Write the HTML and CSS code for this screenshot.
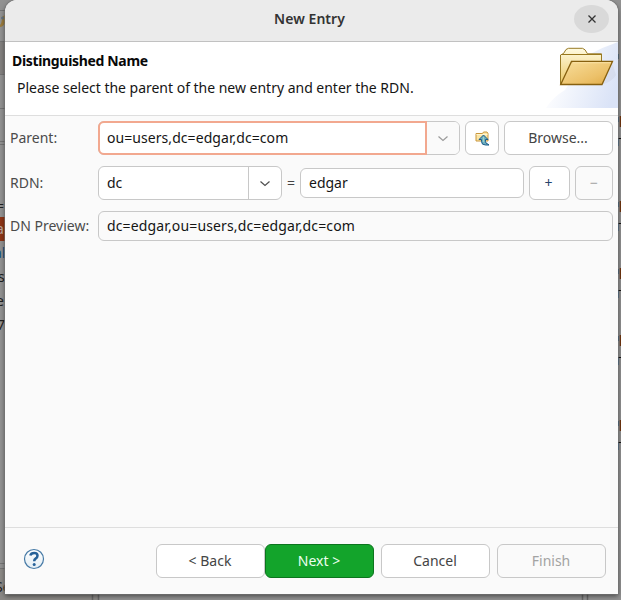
FILE: index.html
```html
<!DOCTYPE html>
<html lang="en">
<head>
<meta charset="utf-8">
<title>New Entry</title>
<link rel="stylesheet" href="styles.css">
</head>
<body>
<svg class="backdrop" width="621" height="600" viewBox="0 0 621 600" aria-hidden="true">
  <rect width="621" height="600" fill="#929292"/>
  <path d="M0 42h5v33H0z" fill="#83817f"/>
  <path d="M0 10.500h5M0 41.500h5M0 74.500h5M0 108.500h5M0 141.500h5M0 144.500h5M0 563.500h5M0 568.500h5" stroke="#747474"/>
  <path d="M-1 26Q2 24 2 17L5 15V23Q3 27 0 27z" fill="#9b7c3e"/><circle cx="2.500" cy="18" r="1.500" fill="#667582"/>
  <path d="M0 569h98v31H0z" fill="#8b8986"/>
  <path d="M92.500 594v6M98.500 594v6M582.500 594v6M587.500 594v6" stroke="#686868" stroke-width="1.500"/>
  <path d="M0 217h5v24H0z" fill="#8e3516"/>
  <g class="backdrop-text">
    <text x="-4" y="211">=</text><text x="-4" y="234" fill="#b9a69e">a</text>
    <text x="-6" y="258" fill="#164f7c">al</text><text x="-2" y="282">s</text>
    <text x="-4" y="306">e</text><text x="-3" y="330">7</text><text x="-5" y="592">Se</text>
  </g>
  <g>
    <path d="M618 138.500h3M618 223.500h3M618 290.500h3M618 357.500h3M618 442.500h3" stroke="#151515"/>
    <path d="M618.500 139v7M618.500 224v7M618.500 291v7M618.500 358v7M618.500 443v7" stroke="#315f88"/>
    <path d="M620.500 116v11M620.500 201v11M620.500 268v11M620.500 335v11M620.500 420v11" stroke="#6f3510" stroke-width="1.500"/>
    <path d="M618.500 117v5M618.500 202v5M618.500 269v5M618.500 336v5M618.500 421v5M618.500 54v5" stroke="#234e73"/>
  </g>
</svg>

<main class="dialog">
  <header class="titlebar">
    <h1><span class="t">New Entry</span></h1>
    <button class="close" aria-label="Close"><svg width="10" height="10" viewBox="0 0 10 10"><path d="M1.500 1.500l7 7M8.500 1.500l-7 7" stroke="#333" stroke-width="1.300"/></svg></button>
  </header>

  <section class="banner">
    <div class="banner-copy">
      <h2><span class="t">Distinguished Name</span></h2>
      <p><span class="t">Please select the parent of the new entry and enter the RDN.</span></p>
    </div>
    <svg class="folder" width="75" height="66" viewBox="0 0 75 66">
      <defs>
        <linearGradient id="glow" x1="0" y1=".3" x2="1" y2=".6"><stop offset=".1" stop-color="#fff"/><stop offset="1" stop-color="#dae3f7"/></linearGradient>
        <linearGradient id="back" x2="0" y2="1"><stop stop-color="#fffbe1"/><stop offset="1" stop-color="#ecc865"/></linearGradient>
        <linearGradient id="front" x2="1" y2="1"><stop stop-color="#f8df9d"/><stop offset=".65" stop-color="#ecc16a"/><stop offset="1" stop-color="#dfaa45"/></linearGradient>
      </defs>
      <path d="M75 0V66H3Q10 55 22 48L45 13Q60 5 75 0z" fill="url(#glow)"/>
      <path d="M58 43L69 20l4 13q-4 7-15 10z" fill="#cbcfdf" opacity=".4"/>
      <path d="M17.500 42.500V13l3-1.500 2.500-4 2.500-1.200h14l2.500 1.500 2.500 4H58.500v28L17.500 42.500z" fill="url(#back)" stroke="#987a25"/>
      <path d="M19 12.500h39" stroke="#98771c"/>
      <path d="M17.700 42.500L28.500 19.500H69.500L59 42.500z" fill="url(#front)" stroke="#87600f" stroke-width="1.300"/>
      <path d="M29.500 20.700H68" stroke="#ffe7ac"/>
    </svg>
  </section>

  <section class="form">
    <div class="row">
      <label><span class="t">Parent:</span></label>
      <div class="combo parent-combo">
        <div class="entry focused"><span class="t w-dn">ou=users,dc=edgar,dc=com</span></div>
        <div class="arrow muted"><svg width="12" height="8" viewBox="0 0 12 8"><path d="M1.500 1.500L6 5.500l4.500-4"/></svg></div>
      </div>
      <button class="btn up" aria-label="Parent">
        <svg width="16" height="16" viewBox="0 0 16 16"><path d="M1 11V3.500h6.500l1-1.500h3.500l1 1.500V11z" fill="#fbe5a5" stroke="#c9963c"/><path d="M1.500 4.500h11" stroke="#fff5cf"/><path d="M8.500 5L4 9.500h2.500v2q0 3.500 4 3.500h3.500l-1.500-1.200q-2-.3-2-2.300v-2H13z" fill="#6fb0bf" stroke="#1b5c8a"/><path d="M8.500 7v5" stroke="#9ed3c6"/></svg>
      </button>
      <button class="btn browse"><span class="t nudge">Browse...</span></button>
    </div>
    <div class="row">
      <label><span class="t">RDN:</span></label>
      <div class="combo type-combo">
        <div class="entry"><span class="t">dc</span></div>
        <div class="arrow"><svg width="12" height="8" viewBox="0 0 12 8"><path d="M1.500 1.500L6 5.500l4.500-4"/></svg></div>
      </div>
      <span class="equals"><span class="t">=</span></span>
      <div class="field value-field"><span class="t">edgar</span></div>
      <button class="btn plus"><span class="t">+</span></button>
      <button class="btn minus disabled"><span class="t">−</span></button>
    </div>
    <div class="row preview-row">
      <label><span class="t">DN Preview:</span></label>
      <div class="field preview"><span class="t w-fulldn">dc=edgar,ou=users,dc=edgar,dc=com</span></div>
    </div>
  </section>

  <footer class="actions">
    <svg class="help" width="22" height="22" viewBox="0 0 22 22"><defs><linearGradient id="help-bg" x2="0" y2="1"><stop stop-color="#fff"/><stop offset="1" stop-color="#e2edf4"/></linearGradient></defs><circle cx="11" cy="11" r="9.500" fill="url(#help-bg)" stroke="#467aa6" stroke-width="1.200"/><path d="M7.300 7.500Q8 5 11.200 5q3.300 0 3.300 2.700 0 1.700-1.900 2.900-1.400.9-1.400 2.700" fill="none" stroke="#266198" stroke-width="2.500"/><circle cx="11.200" cy="16.500" r="1.500" fill="#266198"/></svg>
    <button class="btn action"><span class="t nudge">&lt; Back</span></button>
    <button class="btn action primary"><span class="t nudge">Next &gt;</span></button>
    <button class="btn action cancel"><span class="t nudge">Cancel</span></button>
    <button class="btn action finish disabled"><span class="t nudge">Finish</span></button>
  </footer>
</main>
</body>
</html>
```
FILE: styles.css
```css
* { box-sizing: border-box; }
body { margin: 0; width: 621px; height: 600px; overflow: hidden; position: relative; background: #929292; color: #151515; font: 14px/20px "Noto Sans", sans-serif; }
.backdrop { position: absolute; inset: 0; z-index: -1; }
.backdrop-text { font: 14px "Noto Sans", sans-serif; fill: #202020; }
.dialog { display: flex; flex-direction: column; width: 613px; height: 594px; margin-left: 5px; border-radius: 12px 12px 0 0; background: #fafafa; box-shadow: 0 0 0 1px #77777788, 0 2px 5px #0008; }
h1, h2, p { margin: 0; }
.t { display: inline-block; white-space: nowrap; }
.nudge { margin-right: 1px; }
.titlebar { display: grid; grid-template-columns: 40px 1fr 40px; align-items: center; height: 42px; padding: 0 4px 4px; background: #ebebeb; border-bottom: 1px solid #c1c1c1; border-radius: 12px 12px 0 0; }
h1 { grid-column: 2; text-align: center; font-size: 14px; line-height: 20px; color: #333; font-weight: 600; padding-right: 4px; letter-spacing: .05px; }
.close { display: grid; place-items: center; width: 35px; height: 28px; padding: 0; border: 0; border-radius: 50%; background: #d9d9d9; }
.banner { display: flex; justify-content: space-between; height: 74px; background: #fff; border-bottom: 1px solid #dedede; }
.banner-copy { padding: 9px 0 0 7px; }
h2 { font-size: 14px; line-height: 20px; color: #080808; letter-spacing: -.33px; }
.banner p { margin: 7px 0 0 5px; letter-spacing: -.015px; }
.form { display: flex; flex-direction: column; gap: 11px; padding: 5px 5px 0; }
.row { display: flex; align-items: center; height: 34px; }
.row label { width: 88px; color: #4b4b4b; }
.combo { display: flex; height: 34px; border: 1px solid #c8c8c8; border-radius: 6px; background: #fff; }
.parent-combo { width: 362px; }
.type-combo { width: 184px; }
.entry { display: flex; align-items: center; flex: 1; padding-left: 8px; border-right: 1px solid #c8c8c8; }
.entry.focused { margin: -1px 0 -1px -1px; border: 2px solid #f2a88f; border-radius: 6px 0 0 6px; padding-left: 7px; }
.arrow { display: grid; place-items: center; width: 32px; padding-top: 1px; border-radius: 0 5px 5px 0; }
.arrow path { fill: none; stroke: #4f4f4f; stroke-width: 1.2; }
.arrow.muted { background: #fafafa; }
.arrow.muted path { stroke: #9b9b9b; }
.btn { display: grid; place-items: center; height: 34px; padding: 0; border: 1px solid #c8c8c8; border-radius: 6px; background: #fff; color: #444; font: inherit; }
.up { width: 34px; margin: 0 5px; }
.up svg { margin: 0 0 0 2px; }
.browse { width: 109px; }
.equals { width: 18px; padding-left: 5px; color: #444; }
.field { display: flex; align-items: center; height: 30px; padding-left: 8px; border: 1px solid #c8c8c8; border-radius: 6px; background: #fff; }
.value-field { width: 224px; }
.plus { width: 41px; margin: 0 5px; padding-right: 2px; color: #25456c; }
.minus { width: 38px; }
.btn.disabled { color: #a3a3a3; background: #fafafa; }
.preview-row { height: 30px; }
.preview { width: 515px; background: #fafafa; }
.w-dn { letter-spacing: .06px; }
.w-fulldn { letter-spacing: .14px; }
.actions { display: flex; height: 67px; margin-top: auto; padding: 16px 12px 0 18px; border-top: 1px solid #dedede; }
.help { margin: 4px auto 0 0; }
.action { width: 109px; }
.primary { background: #13a42b; border-color: #0c751e; color: #edfff0; }
.cancel, .finish { margin-left: 7px; }
```
